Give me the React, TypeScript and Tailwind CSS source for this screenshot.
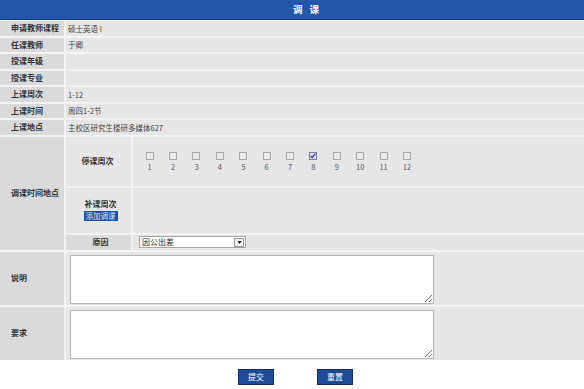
import React from "react"

const infoRows = [
  { label: "申请教师课程", value: "硕士英语 I" },
  { label: "任课教师", value: "于卿" },
  { label: "授课年级", value: "" },
  { label: "授课专业", value: "" },
  { label: "上课周次", value: "1-12" },
  { label: "上课时间", value: "周四1-2节" },
  { label: "上课地点", value: "主校区研究生楼研多媒体627" },
]

const weeks = [1, 2, 3, 4, 5, 6, 7, 8, 9, 10, 11, 12]

function WeekBox({ n, checked }: { n: number; checked: boolean }) {
  return (
    <div className="w-[23.4px] flex flex-col items-center">
      <span
        className={`w-[8px] h-[8px] border flex items-center justify-center ${
          checked ? "border-[#7c7cae] bg-[#dcdcf2]" : "border-[#a8a8a8] bg-[#e9e9e9]"
        }`}
      >
        {checked && (
          <svg viewBox="0 0 8 8" className="w-[6px] h-[6px]">
            <path d="M1 4 L3 6.2 L7 1" fill="none" stroke="#1c1c4c" strokeWidth="1.4" />
          </svg>
        )}
      </span>
      <span className="mt-[3px] text-[7.5px] leading-none text-[#555]">{n}</span>
    </div>
  )
}

function TextBox() {
  return (
    <textarea className="block w-[364px] h-[49px] border border-[#b4b4b4] bg-white resize-y outline-none" />
  )
}

export default function App() {
  return (
    <div className="w-[584px] h-[389px] bg-white font-['Noto_Sans_CJK_SC',sans-serif] text-[#333]">
      {/* Title */}
      <div className="h-[20px] bg-[#2357a9] border-b border-[#163b7a] flex items-center justify-center gap-[7px] pl-[28px] text-white font-bold text-[9.5px] leading-none">
        <span>调</span>
        <span>课</span>
      </div>

      <div className="bg-[#f3f3f3] pt-[1px] flex flex-col gap-[2px]">
        {infoRows.map((row) => (
          <div key={row.label} className="flex gap-[2px] h-[14.5px]">
            <div className="w-[64px] bg-[#dadada] pl-[11px] flex items-center text-[8px] font-bold leading-none whitespace-nowrap">
              {row.label}
            </div>
            <div className="flex-1 bg-[#e6e6e6] pl-[2px] flex items-center text-[7.5px] leading-none text-[#444]">
              {row.value}
            </div>
          </div>
        ))}

        {/* 调课时间地点 */}
        <div className="flex gap-[2px] h-[113px]">
          <div className="w-[64px] bg-[#dadada] pl-[11px] flex items-center text-[8px] font-bold leading-none whitespace-nowrap">
            调课时间地点
          </div>
          <div className="flex-1 flex flex-col gap-[2px]">
            <div className="flex gap-[2px] h-[49px]">
              <div className="w-[65px] bg-[#e6e6e6] flex items-center justify-center text-[8px] font-bold leading-none pr-[2px]">
                停课周次
              </div>
              <div className="flex-1 bg-[#e6e6e6] flex items-center pl-[5px] pt-[1px]">
                {weeks.map((w) => (
                  <WeekBox key={w} n={w} checked={w === 8} />
                ))}
              </div>
            </div>
            <div className="flex gap-[2px] h-[45px]">
              <div className="w-[65px] bg-[#e6e6e6] flex flex-col items-center justify-center gap-[3px] pl-[4px] pt-[1px]">
                <span className="text-[8px] font-bold leading-none">补课周次</span>
                <span className="w-[34px] h-[10px] bg-[#1f4fa1] text-[#d8e6ff] text-[7.5px] leading-none flex items-center justify-center">
                  添加调课
                </span>
              </div>
              <div className="flex-1 bg-[#e6e6e6]" />
            </div>
            <div className="flex gap-[2px] h-[15px]">
              <div className="w-[65px] bg-[#dadada] flex items-center justify-center text-[8px] font-bold leading-none pl-[4px]">
                原因
              </div>
              <div className="flex-1 bg-[#e4e4e4] flex items-center pl-[6px]">
                <div className="w-[107px] h-[12px] bg-white border border-[#a5a5a5] flex items-center justify-between pl-[2px] pr-[1px]">
                  <span className="text-[8px] leading-none text-[#222]">因公出差</span>
                  <span className="w-[10px] h-[9px] border border-[#9a9a9a] bg-[#f4f4f4] flex items-center justify-center">
                    <svg viewBox="0 0 6 4" className="w-[5px] h-[3px]">
                      <path d="M0 0 H6 L3 4 Z" fill="#222" />
                    </svg>
                  </span>
                </div>
              </div>
            </div>
          </div>
        </div>

        {/* 说明 */}
        <div className="flex gap-[2px] h-[53px]">
          <div className="w-[64px] bg-[#dadada] pl-[11px] flex items-center text-[8px] font-bold leading-none">
            说明
          </div>
          <div className="flex-1 bg-[#e6e6e6] pl-[4px] pt-[3px]">
            <TextBox />
          </div>
        </div>

        {/* 要求 */}
        <div className="flex gap-[2px] h-[53px]">
          <div className="w-[64px] bg-[#dadada] pl-[11px] flex items-center text-[8px] font-bold leading-none">
            要求
          </div>
          <div className="flex-1 bg-[#e6e6e6] pl-[4px] pt-[3px]">
            <TextBox />
          </div>
        </div>
      </div>

      <div className="flex justify-center gap-[43px] pl-[7px] pt-[9px]">
        <button className="w-[36px] h-[16px] bg-[#1f4b95] border border-[#0f2d63] text-white text-[8px] leading-none">
          提交
        </button>
        <button className="w-[36px] h-[16px] bg-[#1f4b95] border border-[#0f2d63] text-white text-[8px] leading-none">
          重置
        </button>
      </div>
    </div>
  )
}
